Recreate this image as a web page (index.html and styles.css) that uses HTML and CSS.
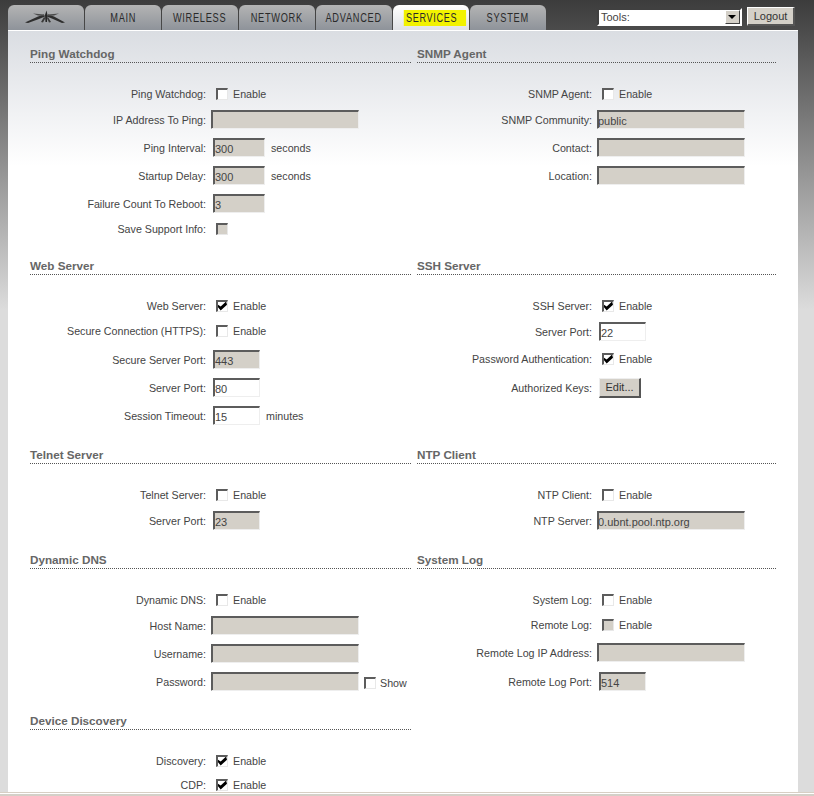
FILE: index.html
```html
<!DOCTYPE html>
<html lang="en">
<head>
    <meta charset="UTF-8">
    <meta name="viewport" content="width=device-width, initial-scale=1.0">
    <title>Services</title>
    <link rel="stylesheet" href="styles.css">
</head>
<body>
    <div class="page">
        <header class="top">
            <nav class="tabs">
                <a class="tab tab-logo" href="#" aria-label="Home">
                    <svg width="44" height="16" viewBox="0 0 44 16">
                        <path d="M1 12.5 L14 6.5 L20 4.5 L21 6.5 L15 9 L4 13 Z" fill="#2e2e2e"/>
                        <path d="M41 12.5 L30 6.5 L24 4.5 L23 6.5 L29 9 L38 13 Z" fill="#2e2e2e"/>
                        <path d="M9 3.5 L20 4.5 L20 6 L14 5.5 Z" fill="#4a4a4a"/>
                        <path d="M35 3.5 L24 4.5 L24 6 L30 5.5 Z" fill="#4a4a4a"/>
                        <path d="M21 5 L22.5 0.5 L23.5 5 L23 12 L21.5 12 Z" fill="#262626"/>
                        <path d="M20 7 L17 12 L19 12.5 L21.5 8 Z" fill="#3a3a3a"/>
                        <path d="M24 7 L27 12 L25 12.5 L23 8 Z" fill="#3a3a3a"/>
                    </svg>
                </a>
                <a class="tab" href="#"><span class="tab-label">MAIN</span></a>
                <a class="tab" href="#"><span class="tab-label">WIRELESS</span></a>
                <a class="tab" href="#"><span class="tab-label">NETWORK</span></a>
                <a class="tab" href="#"><span class="tab-label">ADVANCED</span></a>
                <a class="tab tab-active" href="#"><span class="tab-label marker">SERVICES</span></a>
                <a class="tab" href="#"><span class="tab-label">SYSTEM</span></a>
            </nav>
            <div class="tools">
                <div class="select">
                    <span class="select-value">Tools:</span>
                    <span class="select-arrow"></span>
                </div>
                <button class="btn" type="button">Logout</button>
            </div>
        </header>

        <main class="panel">
            <div class="section">
                <div class="col col-left">
                    <h2>Ping Watchdog</h2>
                    <div class="row r26"><label>Ping Watchdog:</label><input class="check" type="checkbox"><span class="after">Enable</span></div>
                    <div class="row r27"><label>IP Address To Ping:</label><input class="text wide off" type="text"></div>
                    <div class="row"><label>Ping Interval:</label><input class="text mid off" type="text" value="300"><span class="unit">seconds</span></div>
                    <div class="row"><label>Startup Delay:</label><input class="text mid off" type="text" value="300"><span class="unit">seconds</span></div>
                    <div class="row"><label>Failure Count To Reboot:</label><input class="text mid off" type="text" value="3"></div>
                    <div class="row r22"><label>Save Support Info:</label><input class="check off" type="checkbox"></div>
                </div>
                <div class="col col-right">
                    <h2>SNMP Agent</h2>
                    <div class="row r26"><label>SNMP Agent:</label><input class="check" type="checkbox"><span class="after">Enable</span></div>
                    <div class="row r27"><label>SNMP Community:</label><input class="text wide off" type="text" value="public"></div>
                    <div class="row"><label>Contact:</label><input class="text wide off" type="text"></div>
                    <div class="row"><label>Location:</label><input class="text wide off" type="text"></div>
                </div>
            </div>

            <div class="section">
                <div class="col col-left">
                    <h2>Web Server</h2>
                    <div class="row r26"><label>Web Server:</label><input class="check" type="checkbox" checked><span class="after">Enable</span></div>
                    <div class="row r25"><label>Secure Connection (HTTPS):</label><input class="check" type="checkbox"><span class="after">Enable</span></div>
                    <div class="row r32"><label>Secure Server Port:</label><input class="text small off" type="text" value="443"></div>
                    <div class="row r26 up"><label>Server Port:</label><input class="text small" type="text" value="80"></div>
                    <div class="row"><label>Session Timeout:</label><input class="text small" type="text" value="15"><span class="unit">minutes</span></div>
                </div>
                <div class="col col-right">
                    <h2>SSH Server</h2>
                    <div class="row r26"><label>SSH Server:</label><input class="check" type="checkbox" checked><span class="after">Enable</span></div>
                    <div class="row r27"><label>Server Port:</label><input class="text small" type="text" value="22"></div>
                    <div class="row r26"><label>Password Authentication:</label><input class="check" type="checkbox" checked><span class="after">Enable</span></div>
                    <div class="row r32"><label>Authorized Keys:</label><button class="btn btn-edit" type="button">Edit...</button></div>
                </div>
            </div>

            <div class="section">
                <div class="col col-left">
                    <h2>Telnet Server</h2>
                    <div class="row r26"><label>Telnet Server:</label><input class="check" type="checkbox"><span class="after">Enable</span></div>
                    <div class="row r27"><label>Server Port:</label><input class="text small off" type="text" value="23"></div>
                </div>
                <div class="col col-right">
                    <h2>NTP Client</h2>
                    <div class="row r26"><label>NTP Client:</label><input class="check" type="checkbox"><span class="after">Enable</span></div>
                    <div class="row r27"><label>NTP Server:</label><input class="text wide off" type="text" value="0.ubnt.pool.ntp.org"></div>
                </div>
            </div>

            <div class="section">
                <div class="col col-left">
                    <h2>Dynamic DNS</h2>
                    <div class="row r26"><label>Dynamic DNS:</label><input class="check" type="checkbox"><span class="after">Enable</span></div>
                    <div class="row r27"><label>Host Name:</label><input class="text wide off" type="text"></div>
                    <div class="row"><label>Username:</label><input class="text wide off" type="text"></div>
                    <div class="row"><label>Password:</label><input class="text wide off" type="text"><input class="check check-show" type="checkbox"><span class="after-show">Show</span></div>
                </div>
                <div class="col col-right">
                    <h2>System Log</h2>
                    <div class="row r26"><label>System Log:</label><input class="check" type="checkbox"><span class="after">Enable</span></div>
                    <div class="row r25"><label>Remote Log:</label><input class="check off" type="checkbox"><span class="after">Enable</span></div>
                    <div class="row r30"><label>Remote Log IP Address:</label><input class="text wide off" type="text"></div>
                    <div class="row"><label>Remote Log Port:</label><input class="text small off" type="text" value="514"></div>
                </div>
            </div>

            <div class="section">
                <div class="col col-left">
                    <h2>Device Discovery</h2>
                    <div class="row r26"><label>Discovery:</label><input class="check" type="checkbox" checked><span class="after">Enable</span></div>
                    <div class="row r22"><label>CDP:</label><input class="check" type="checkbox" checked><span class="after">Enable</span></div>
                </div>
                <div class="col col-right"></div>
            </div>
        </main>

        <div class="statusbar"></div>
    </div>
</body>
</html>
```

FILE: styles.css
```css
html, body {
    margin: 0;
    padding: 0;
}

body {
    font-family: "Liberation Sans", Arial, sans-serif;
    font-size: 10.7px;
    color: #444;
}

.page {
    display: flex;
    flex-direction: column;
    height: 796px;
    overflow: hidden;
    background: linear-gradient(180deg, #3c3c3c 0, #dcdcdc 310px);
}

/* top bar */
.top {
    display: flex;
    justify-content: space-between;
    height: 30px;
    padding: 0 19px 0 8px;
    flex: none;
}

.tabs {
    display: flex;
    gap: 1px;
    padding-top: 5px;
}

.tab {
    display: flex;
    align-items: center;
    justify-content: center;
    width: 76px;
    height: 25px;
    box-sizing: border-box;
    border-radius: 6px 6px 0 0;
    background: linear-gradient(180deg, #b4b4b4, #8e939a);
    color: #2a2a2a;
    font-family: "Liberation Sans", sans-serif;
    font-size: 13px;
    letter-spacing: 1px;
    text-decoration: none;
}

.tab-active {
    background: linear-gradient(180deg, #fff, #e0e2e6);
}

.tab-label {
    display: inline-block;
    flex: none;
    transform: scaleX(0.71);
}

.marker {
    padding: 0 12px 0 3px;
    line-height: 16px;
    background: #f2f200;
    transform: translateX(3.5px) scaleX(0.7);
}

.tools {
    display: flex;
    align-items: flex-start;
    gap: 5px;
    padding-top: 7px;
}

.select {
    display: flex;
    justify-content: space-between;
    width: 145px;
    height: 18px;
    box-sizing: border-box;
    margin-top: 1px;
    border: 2px solid #404040;
    border-right-color: #fff;
    border-bottom-color: #fff;
    background: #fff;
    font-size: 11px;
}

.select-value {
    padding-left: 2px;
    line-height: 14px;
}

.select-arrow {
    position: relative;
    width: 15px;
    box-sizing: border-box;
    border: 1px solid #fff;
    border-right-color: #404040;
    border-bottom-color: #404040;
    background: #d4d0c8;
}

.select-arrow::after {
    content: "";
    position: absolute;
    left: 2px;
    top: 4px;
    border: 4px solid transparent;
    border-top: 4px solid #000;
    border-bottom: 0;
}

.btn {
    height: 19px;
    padding: 0;
    width: 48px;
    box-sizing: border-box;
    border: 1px solid #fff;
    border-right: 2px solid #555;
    border-bottom: 2px solid #555;
    background: #d4d0c8;
    color: #333;
    font-family: inherit;
    font-size: 11px;
}

.btn-edit {
    width: 42px;
    height: 20px;
    margin-left: 2px;
    border-top-color: #eee;
    border-left-color: #eee;
}

/* panel */
.panel {
    flex: 1;
    min-height: 0;
    overflow: hidden;
    width: 790px;
    margin-left: 8px;
    box-sizing: border-box;
    padding: 14px 22px 0;
    border-top: 1px solid #fff;
    background: linear-gradient(180deg, #dadde2 0, #fff 135px);
}

.section {
    display: grid;
    grid-template-columns: 381px 359px;
    column-gap: 6px;
    margin-bottom: 16px;
}

.section:first-child {
    margin-bottom: 17px;
}

h2 {
    margin: 0 0 18px;
    height: 17px;
    line-height: 17px;
    border-bottom: 1px dotted #555;
    color: #666;
    font-size: 11.7px;
    font-weight: bold;
}

.row {
    display: flex;
    align-items: center;
    box-sizing: border-box;
    height: 28px;
    padding-bottom: 1px;
}

.r22 { height: 22px; }
.r25 { height: 25px; }
.r26 { height: 26px; }
.r27 { height: 27px; padding-bottom: 2px; }
.r30 { height: 30px; }
.r32 { height: 32px; }
.up { padding-bottom: 3px; }

label {
    width: 176px;
    margin-right: 5px;
    text-align: right;
    white-space: nowrap;
}

.col-right label {
    width: 175px;
}

/* text runs into the dark inner edge, like the old windows fields */
.text {
    box-sizing: border-box;
    height: 19px;
    margin: 0;
    padding: 1px 0 0;
    border: 1px solid #5c5c5c;
    border-top-width: 2px;
    border-right-color: #eee;
    border-bottom-color: #eee;
    border-radius: 0;
    box-shadow: inset 1px 0 #5c5c5c;
    background: #fff;
    color: #444;
    font-family: inherit;
    font-size: 11px;
}

.wide {
    width: 148px;
}

.mid {
    width: 52px;
    margin-left: 2px;
    padding-left: 1px;
}

.small {
    width: 47px;
    margin-left: 2px;
    padding-left: 1px;
}

.off {
    background: #d4d0c8;
}

.unit {
    margin-left: 6px;
}

.check {
    appearance: none;
    position: relative;
    box-sizing: border-box;
    width: 12px;
    height: 12px;
    margin: 0 0 0 5px;
    border: 2px solid #5c5c5c;
    border-right: 1px solid #e8e8e8;
    border-bottom: 1px solid #e8e8e8;
    border-radius: 0;
    background: #fff;
}

.check.off {
    background: #d4d0c8;
}

.check:checked::after {
    content: "";
    position: absolute;
    left: 0;
    top: 0;
    width: 9px;
    height: 9px;
    background: #000;
    clip-path: polygon(0 35%, 30% 55%, 90% 0, 100% 35%, 30% 100%, 0 65%);
}

.after {
    margin-left: 5px;
}

.check-show {
    margin-top: 3px;
}

.after-show {
    margin: 2px 0 0 4px;
}

.statusbar {
    flex: none;
    height: 4px;
    box-sizing: border-box;
    border-top: 1px solid #d8cfc4;
    border-bottom: 2px solid #d4d0c8;
    background: #fff;
}
```
